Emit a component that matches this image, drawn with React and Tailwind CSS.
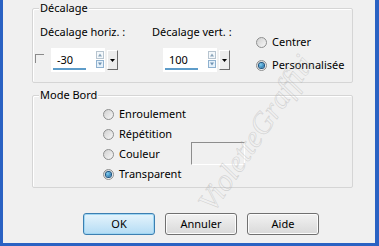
import React from "react";

const font = { fontFamily: '"Noto Sans", "Open Sans", sans-serif' };

function Radio({ checked }) {
  return (
    <span className="relative flex h-[11px] w-[11px] shrink-0 items-center justify-center rounded-full border border-[#8e8f8f] bg-gradient-to-br from-[#d0d0d0] to-[#f8f8f8]">
      {checked && (
        <span className="h-[5px] w-[5px] rounded-full bg-[radial-gradient(circle_at_35%_35%,#7fd0f5,#0e5a94)] ring-1 ring-[#1c5380]" />
      )}
    </span>
  );
}

function RadioRow({ label, checked }) {
  return (
    <div className="flex h-[16px] items-center gap-[5px] whitespace-nowrap">
      <Radio checked={checked} />
      <span>{label}</span>
    </div>
  );
}

function Spin({ value }) {
  return (
    <div className="flex h-[24px] items-center">
      <div className="relative flex h-[24px] w-[54px] items-center bg-white pl-[6px]">
        <span>{value}</span>
        <span className="absolute bottom-[2px] left-[2px] h-[2px] w-[33px] bg-[#5d9cc9]" />
        <div className="absolute right-[1px] top-[3px] flex flex-col gap-[1px]">
          <svg width="8" height="8" viewBox="0 0 8 8">
            <rect x="0.5" y="0.5" width="7" height="7" fill="#f4f8fb" stroke="#b7c4cf" />
            <path d="M2 5.5 L4 2.5 L6 5.5 Z" fill="#8aa4ba" />
          </svg>
          <svg width="8" height="8" viewBox="0 0 8 8">
            <rect x="0.5" y="0.5" width="7" height="7" fill="#e6f1fa" stroke="#8fb1cf" />
            <path d="M2 2.5 L4 5.5 L6 2.5 Z" fill="#6f93b4" />
          </svg>
        </div>
      </div>
      <div className="ml-[2px] flex h-[20px] w-[11px] items-center justify-center border-t border-l border-t-white border-l-white border-r border-b border-r-[#6b6b6b] border-b-[#6b6b6b] bg-[#ececec]">
        <svg width="5" height="3" viewBox="0 0 5 3">
          <path d="M0 0 L5 0 L2.5 3 Z" fill="#000" />
        </svg>
      </div>
    </div>
  );
}

function Button({ children, primary }) {
  return (
    <div
      className={
        "flex h-[22px] w-[72px] items-center justify-center rounded-[3px] border " +
        (primary
          ? "border-[#3c7fb1] bg-gradient-to-b from-[#e5f4fc] to-[#b4dcf4] shadow-[inset_0_0_0_1px_#9fd6f3]"
          : "border-[#707070] bg-gradient-to-b from-[#f2f2f2] to-[#d9d9d9] shadow-[inset_0_0_0_1px_#fcfcfc]")
      }
    >
      {children}
    </div>
  );
}

export default function App() {
  return (
    <div
      style={font}
      className="relative flex h-[246px] w-[379px] flex-col overflow-hidden border-b-[3px] border-l-[3px] border-r-[4px] border-[#2a62c3] bg-[#f0f0f0] text-[11px] leading-[16px] text-black"
    >
      {/* Groupbox Décalage */}
      <div className="relative ml-[29px] mt-[8px] h-[75px] w-[321px] rounded-[2px] border border-[#d5d5d5] shadow-[inset_1px_1px_0_#fff]">
        <span className="absolute left-[6px] top-[-9px] whitespace-nowrap bg-[#f0f0f0] px-[1px]">Décalage</span>
        <div className="flex whitespace-nowrap">
          <div className="ml-[2px] flex w-[117px] shrink-0 flex-col">
            <span className="ml-[5px] mt-[15px]">Décalage horiz. :</span>
            <div className="mt-[8px] flex items-start">
              <span className="mt-[6px] h-[9px] w-[9px] border-l border-t border-[#8a8a8a]" />
              <span className="ml-[7px]">
                <Spin value="-30" />
              </span>
            </div>
          </div>
          <div className="flex w-[104px] shrink-0 flex-col">
            <span className="mt-[15px]">Décalage vert. :</span>
            <div className="ml-[11px] mt-[8px]">
              <Spin value="100" />
            </div>
          </div>
          <div className="mt-[25px] flex flex-col gap-[7px]">
            <RadioRow label="Centrer" />
            <RadioRow label="Personnalisée" checked />
          </div>
        </div>
      </div>

      {/* Groupbox Mode Bord */}
      <div className="relative ml-[29px] mt-[12px] h-[93px] w-[321px] rounded-[2px] border border-[#d5d5d5] shadow-[inset_1px_1px_0_#fff]">
        <span className="absolute left-[6px] top-[-9px] whitespace-nowrap bg-[#f0f0f0] px-[1px]">Mode Bord</span>
        <div className="ml-[70px] mt-[10px] flex flex-col gap-[4px]">
          <RadioRow label="Enroulement" />
          <RadioRow label="Répétition" />
          <div className="flex h-[16px] items-center">
            <div className="w-[88px]">
              <RadioRow label="Couleur" />
            </div>
            <div className="mt-[-2px] h-[23px] w-[54px] border border-b-white border-l-[#8d8d8d] border-r-white border-t-[#8d8d8d] bg-[#f0f0f0]" />
          </div>
          <RadioRow label="Transparent" checked />
        </div>
      </div>

      {/* Buttons */}
      <div className="ml-[80px] mt-[25px] flex gap-[10px]">
        <Button primary>OK</Button>
        <Button>Annuler</Button>
        <Button>Aide</Button>
      </div>

      {/* watermark */}
      <span
        className="pointer-events-none absolute left-[202px] top-[200px] origin-left -rotate-[56deg] whitespace-nowrap text-[30px] italic text-transparent"
        style={{ WebkitTextStroke: "0.6px rgba(170,170,170,0.45)", fontFamily: '"Liberation Serif", serif' }}
      >
        VioletteGraffiti
      </span>
    </div>
  );
}
